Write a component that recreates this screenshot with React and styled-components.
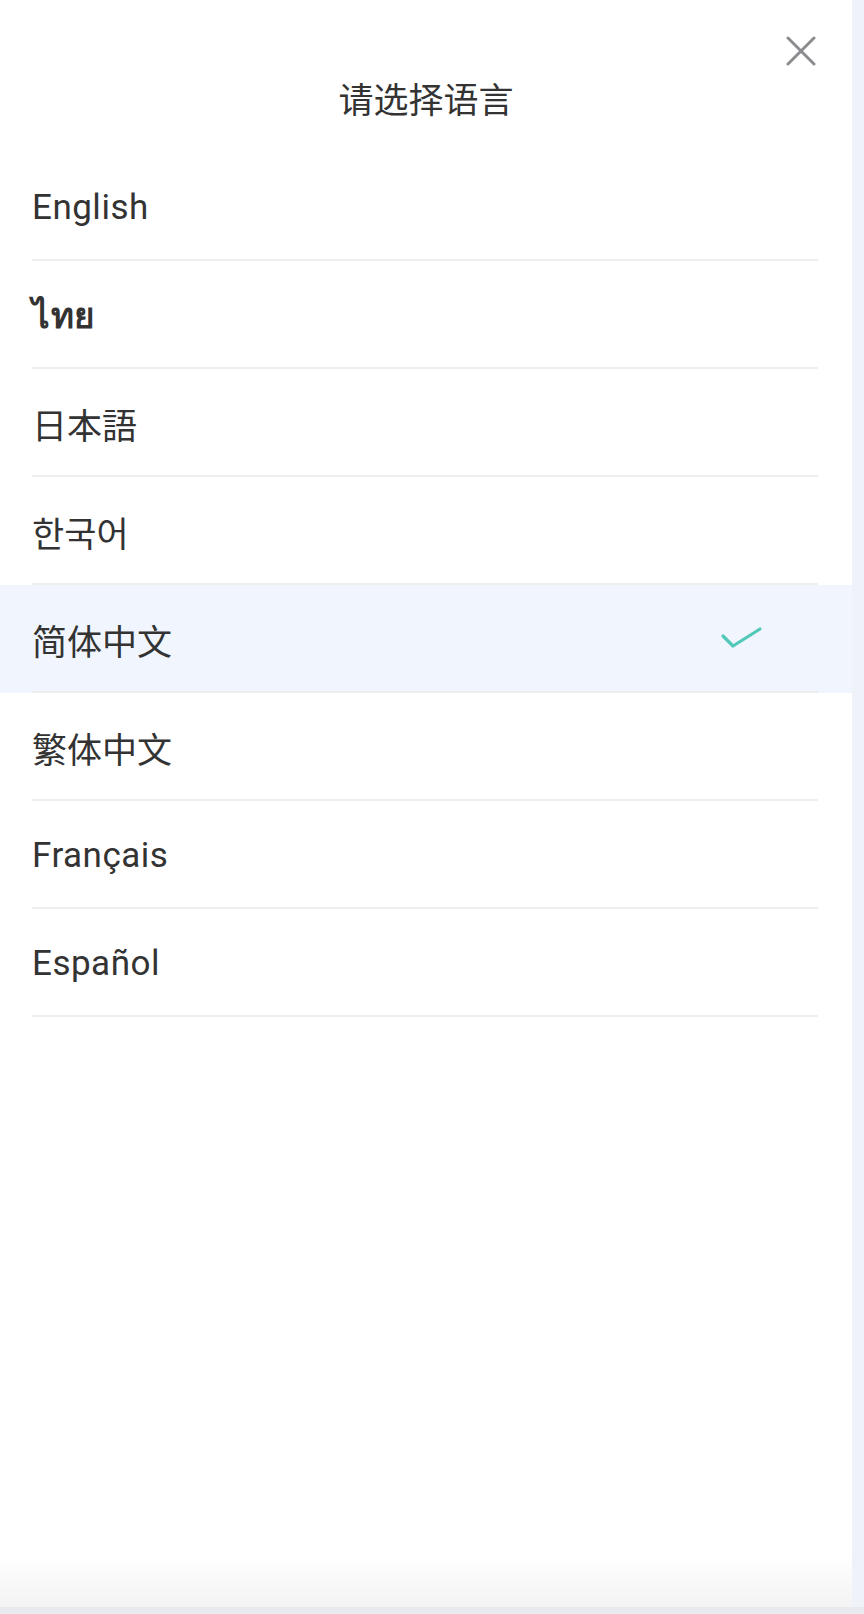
import React from "react";
import styled, { createGlobalStyle } from "styled-components";

const Global = createGlobalStyle`
  html, body { margin: 0; padding: 0; }
  body { font-family: Roboto, "Noto Sans", "Noto Sans CJK SC", sans-serif; background: #eef2f8; }
`;

const Page = styled.div`
  width: 864px;
  height: 1614px;
  display: flex;
  flex-direction: column;
  background: #eef2f8;
`;

const Main = styled.div`
  display: flex;
  height: 1607px;
`;

const Panel = styled.div`
  width: 852px;
  height: 100%;
  background: linear-gradient(to bottom, #ffffff calc(100% - 52px), #f3f3f3 100%);
  display: flex;
  flex-direction: column;
`;

const Side = styled.div`
  flex: 1;
  background: #eff2f9;
`;

const BottomBar = styled.div`
  height: 7px;
  background: #e7eaef;
`;

const Header = styled.div`
  position: relative;
  height: 153px;
  display: flex;
  justify-content: center;
  align-items: flex-start;
`;

const Title = styled.h1`
  margin: 72px 0 0;
  height: 52px;
  line-height: 52px;
  font-size: 35px;
  font-weight: 400;
  color: #333;
  font-family: "Noto Sans CJK SC", sans-serif;
`;

const Close = styled.button`
  position: absolute;
  top: 36px;
  right: 36px;
  width: 30px;
  height: 30px;
  padding: 0;
  border: 0;
  background: transparent;
  display: flex;
  align-items: center;
  justify-content: center;
  cursor: pointer;
`;

const List = styled.ul`
  list-style: none;
  margin: 0;
  padding: 0;
`;

const Row = styled.li`
  height: 108px;
  background: ${(p) => (p.$active ? "#f1f5fe" : "transparent")};
  padding: 0 34px 0 32px;
  box-sizing: border-box;
`;

const RowInner = styled.div`
  height: 100%;
  box-sizing: border-box;
  border-bottom: 2px solid #eeeeee;
  display: flex;
  align-items: center;
  justify-content: space-between;
  padding-top: 2px;
`;

const Label = styled.span`
  font-size: 35px;
  color: #333;
  font-weight: ${(p) => (p.$bold ? 700 : 400)};
  font-family: ${(p) =>
    p.$cjk
      ? `"Noto Sans CJK ${p.$cjk}", sans-serif`
      : `Roboto, "Noto Sans", sans-serif`};
  letter-spacing: ${(p) => (p.$cjk ? "0" : "0.5px")};
`;

const Check = styled.svg`
  margin-right: 54px;
`;

const languages = [
  { name: "English" },
  { name: "ไทย", bold: true },
  { name: "日本語", cjk: "JP" },
  { name: "한국어", cjk: "KR" },
  { name: "简体中文", cjk: "SC", active: true },
  { name: "繁体中文", cjk: "SC" },
  { name: "Français" },
  { name: "Español" },
];

export default function App() {
  return (
    <Page>
      <Global />
      <Main>
        <Panel>
          <Header>
            <Title>请选择语言</Title>
            <Close aria-label="close">
              <svg width="30" height="30" viewBox="0 0 30 30">
                <path
                  d="M2 2 L28 28 M28 2 L2 28"
                  stroke="#8c8c90"
                  strokeWidth="3"
                  strokeLinecap="round"
                  fill="none"
                />
              </svg>
            </Close>
          </Header>
          <List>
            {languages.map((l) => (
              <Row key={l.name} $active={l.active}>
                <RowInner>
                  <Label $cjk={l.cjk} $bold={l.bold}>{l.name}</Label>
                  {l.active && (
                    <Check width="44" height="26" viewBox="0 0 44 26">
                      <path
                        d="M3 10 L13 20 L40 3"
                        stroke="#52c9b8"
                        strokeWidth="3.2"
                        strokeLinecap="round"
                        strokeLinejoin="round"
                        fill="none"
                      />
                    </Check>
                  )}
                </RowInner>
              </Row>
            ))}
          </List>
        </Panel>
        <Side />
      </Main>
      <BottomBar />
    </Page>
  );
}
